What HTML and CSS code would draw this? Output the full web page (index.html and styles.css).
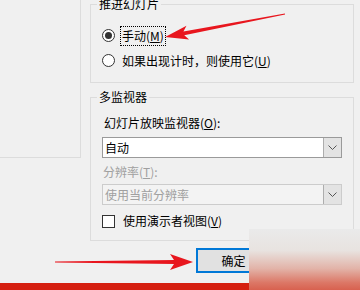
FILE: index.html
```html
<!DOCTYPE html>
<html lang="zh-CN">
<head>
    <meta charset="UTF-8">
    <title>设置放映方式</title>
    <link rel="stylesheet" href="styles.css">
</head>
<body>
    <div class="dialog">
        <div class="left-box"></div>
        <div class="right-col">
            <fieldset class="group group-advance">
                <legend>推进幻灯片</legend>
                <div class="radio-list">
                    <div class="radio-row">
                        <span class="radio checked"></span>
                        <span class="radio-label focused">手动(<u>M</u>)</span>
                    </div>
                    <div class="radio-row">
                        <span class="radio"></span>
                        <span class="radio-label">如果出现计时，则使用它(<u>U</u>)</span>
                    </div>
                </div>
            </fieldset>

            <fieldset class="group group-monitor">
                <legend>多监视器</legend>
                <div class="field-label">幻灯片放映监视器(<u>O</u>):</div>
                <div class="combo">
                    <span class="combo-text">自动</span>
                    <span class="combo-btn">
                        <svg width="9" height="5" viewBox="0 0 9 5"><path d="M0.5 0.5 L4.5 4.5 L8.5 0.5" fill="none" stroke="#555" stroke-width="1"/></svg>
                    </span>
                </div>
                <div class="field-label disabled">分辨率(<u>T</u>):</div>
                <div class="combo combo-disabled">
                    <span class="combo-text">使用当前分辨率</span>
                    <span class="combo-btn">
                        <svg width="9" height="5" viewBox="0 0 9 5"><path d="M0.5 0.5 L4.5 4.5 L8.5 0.5" fill="none" stroke="#555" stroke-width="1"/></svg>
                    </span>
                </div>
                <div class="check-row">
                    <span class="checkbox"></span>
                    <span>使用演示者视图(<u>V</u>)</span>
                </div>
            </fieldset>

            <div class="actions">
                <button class="btn-ok" type="button">确定</button>
            </div>
        </div>
    </div>
    <div class="taskbar"></div>

    <!-- annotations -->
    <div class="watermark"></div>
    <svg class="arrows" width="360" height="290" viewBox="0 0 360 290">
        <polygon transform="translate(285,14) rotate(169.15)" points="0,-0.5 103,-2 99,-7 122,0 99,7 103,2 0,0.5" fill="#e8161e"/>
        <polygon transform="translate(55,262)" points="0,-0.6 119,-2 115,-8 138,0 115,8 119,2 0,0.6" fill="#e8161e"/>
    </svg>
</body>
</html>
```

FILE: styles.css
```css
body {
    margin: 0;
    width: 360px;
    height: 290px;
    overflow: hidden;
    background-color: #f0f0f0;
    font-family: "Noto Sans CJK SC", "Microsoft YaHei", sans-serif;
    font-size: 12px;
    line-height: 16px;
    color: #000;
    display: flex;
    flex-direction: column;
    position: relative;
}
.dialog {
    display: flex;
    flex: 1;
}
.left-box {
    width: 81px;
    height: 158px;
    box-sizing: border-box;
    border-right: 1px solid #dcdcdc;
    border-bottom: 1px solid #dcdcdc;
    flex-shrink: 0;
}
.right-col {
    margin-left: 9px;
    width: 264px;
}
.group {
    margin: 0;
    padding: 0 11px;
    border: 1px solid #dcdcdc;
    min-width: 0;
}
.group legend {
    margin-left: -5px;
    padding: 0 2px;
    line-height: 16px;
}
.group-advance {
    margin-top: -4px;
}
.radio-list {
    display: flex;
    flex-direction: column;
    gap: 4px;
    padding: 13px 0 11px;
}
.radio-row {
    display: flex;
    align-items: center;
    height: 21px;
}
.radio {
    width: 13px;
    height: 13px;
    box-sizing: border-box;
    border: 1px solid #333;
    border-radius: 50%;
    background-color: #fff;
    display: flex;
    align-items: center;
    justify-content: center;
    margin-right: 5px;
}
.radio.checked::after {
    content: "";
    width: 7px;
    height: 7px;
    border-radius: 50%;
    background-color: #333;
}
.radio-label {
    border: 1px dotted transparent;
    padding: 1px;
}
.radio-label.focused {
    border-color: #000;
}
.group-monitor {
    margin-top: 6px;
    padding-bottom: 11px;
}
.field-label {
    margin-left: 2px;
    margin-top: 10px;
}
.field-label.disabled {
    color: #a0a0a0;
    margin-top: 6px;
    margin-left: 1px;
}
.combo {
    margin-top: 6px;
    height: 21px;
    box-sizing: border-box;
    border: 1px solid #9a9a9a;
    background-color: #fff;
    display: flex;
    align-items: center;
}
.combo-text {
    flex: 1;
    padding-left: 2px;
}
.combo-btn {
    width: 18px;
    height: 100%;
    box-sizing: border-box;
    border-left: 1px solid #adadad;
    background-color: #e3e3e3;
    display: flex;
    align-items: center;
    justify-content: center;
}
.combo-disabled {
    margin-top: 4px;
    border-color: #cccccc;
    background-color: #f3f3f3;
    color: #a0a0a0;
}
.check-row {
    display: flex;
    align-items: center;
    margin-top: 8px;
}
.checkbox {
    width: 13px;
    height: 13px;
    box-sizing: border-box;
    border: 1px solid #333;
    background-color: #fff;
    margin-right: 8px;
}
.actions {
    padding-left: 106px;
    margin-top: 7px;
}
.btn-ok {
    width: 75px;
    height: 25px;
    box-sizing: border-box;
    border: 2px solid #0078d7;
    background-color: #e1e1e1;
    font-family: inherit;
    font-size: 12px;
    color: #000;
    padding: 0;
}
.taskbar {
    height: 7px;
    background-color: #d51f10;
    flex-shrink: 0;
}
.watermark {
    position: absolute;
    left: 249px;
    top: 229px;
    right: 0;
    bottom: 0;
    background: linear-gradient(to bottom, #eaeaea 0%, #e8e3e0 35%, #e2b3a8 65%, #dc7766 88%, #d8614f 100%);
}
.arrows {
    position: absolute;
    left: 0;
    top: 0;
    pointer-events: none;
}
```
